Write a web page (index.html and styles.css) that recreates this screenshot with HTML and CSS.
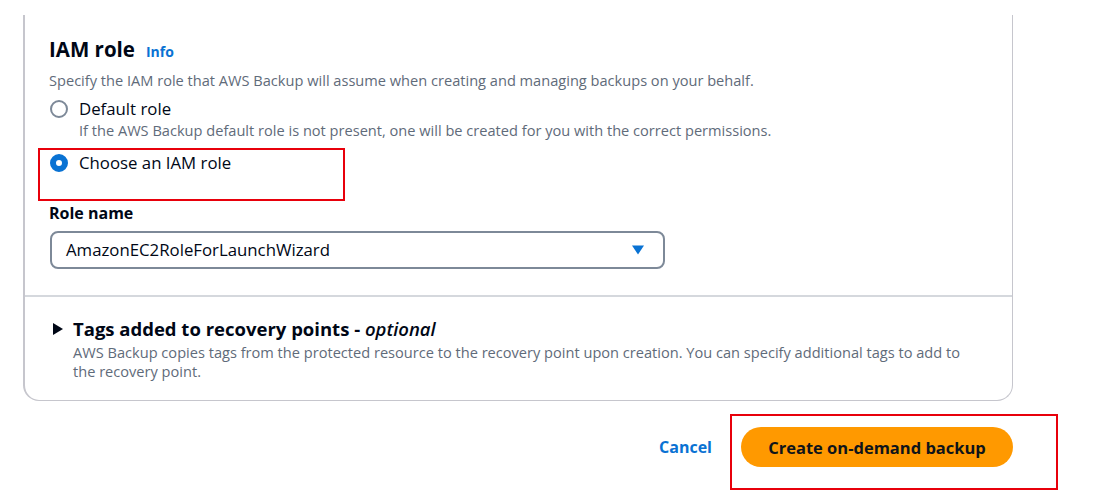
FILE: index.html
```html
<!DOCTYPE html>
<html>
<head>
<meta charset="utf-8">
<link rel="stylesheet" href="styles.css">
</head>
<body>
<div class="page">
  <div class="card">
    <div class="section">
      <div class="heading">
        <h2 class="title">IAM role</h2>
        <a class="info">Info</a>
      </div>
      <p class="desc">Specify the IAM role that AWS Backup will assume when creating and managing backups on your behalf.</p>
      <div class="radio-group">
        <div class="radio-row">
          <span class="radio"></span>
          <div class="radio-text">
            <div class="radio-label">Default role</div>
            <div class="radio-desc">If the AWS Backup default role is not present, one will be created for you with the correct permissions.</div>
          </div>
        </div>
        <div class="radio-row highlight">
          <span class="radio checked"></span>
          <div class="radio-text">
            <div class="radio-label">Choose an IAM role</div>
          </div>
        </div>
      </div>
      <div class="field">
        <div class="field-label">Role name</div>
        <div class="select">
          <span class="select-value">AmazonEC2RoleForLaunchWizard</span>
          <svg class="caret" width="14" height="12" viewBox="0 0 14 12"><path d="M1 1.5h12L7 10.5z" fill="#0972d3"/></svg>
        </div>
      </div>
    </div>
    <div class="tags">
      <div class="tags-head">
        <svg class="tri" width="10" height="12" viewBox="0 0 10 12"><path d="M0 0L10 6L0 12z" fill="#000716"/></svg>
        <span class="tags-title">Tags added to recovery points - <i>optional</i></span>
      </div>
      <p class="tags-desc">AWS Backup copies tags from the protected resource to the recovery point upon creation. You can specify additional tags to add to the recovery point.</p>
    </div>
  </div>
  <div class="actions">
    <a class="cancel">Cancel</a>
    <div class="primary-wrap">
      <button class="primary">Create on-demand backup</button>
    </div>
  </div>
</div>
</body>
</html>
```

FILE: styles.css
```css
* { box-sizing: border-box; }
html, body { margin: 0; padding: 0; background: #fff; }
body {
  font-family: "Open Sans", "Noto Sans", Arial, sans-serif;
  color: #000716;
  width: 1107px;
  height: 502px;
  overflow: hidden;
}
.page {
  padding: 15px 0 0 23px;
  width: 1107px;
}
.card {
  width: 990px;
  border: 1px solid #c6c6cd;
  border-left-width: 2px;
  border-top: none;
  border-radius: 0 0 16px 16px;
}
.section {
  padding: 22px 24px 26px 24px;
}
.heading {
  display: flex;
  align-items: baseline;
  gap: 11px;
  height: 24px;
}
.title {
  margin: 0;
  font-size: 20.5px;
  line-height: 24px;
  font-weight: 700;
}
.info {
  font-size: 14px;
  font-weight: 700;
  color: #0972d3;
}
.desc {
  margin: 9px 0 0 0;
  font-size: 14.6px;
  line-height: 20px;
  color: #5f6b7a;
}
.radio-group {
  margin-top: 8px;
  display: flex;
  flex-direction: column;
}
.radio-row {
  display: flex;
  align-items: flex-start;
  gap: 11px;
  padding-left: 1px;
}
.radio-row.highlight {
  position: relative;
  margin-top: 12px;
  height: 22px;
}
.radio-row.highlight::before {
  content: "";
  position: absolute;
  left: -11px;
  top: -4px;
  width: 303px;
  height: 49px;
  border: 2px solid #e8000b;
  pointer-events: none;
}
.radio {
  flex: none;
  width: 18px;
  height: 18px;
  margin-top: 2px;
  border-radius: 50%;
  border: 2px solid #7d8998;
  background: #fff;
}
.radio.checked {
  border: 6px solid #0972d3;
}
.radio-label {
  font-size: 16.8px;
  line-height: 22px;
}
.radio-desc {
  font-size: 14.6px;
  line-height: 20px;
  color: #5f6b7a;
}
.field {
  margin-top: 28px;
}
.field-label {
  font-size: 16px;
  font-weight: 700;
  line-height: 22px;
}
.select {
  margin-top: 7px;
  margin-left: 1px;
  width: 615px;
  height: 38px;
  border: 2px solid #7d8998;
  border-radius: 8px;
  display: flex;
  align-items: center;
  justify-content: space-between;
  padding: 0 18px 0 14px;
}
.select-value {
  font-size: 16.8px;
  line-height: 22px;
}
.caret { display: block; }
.tags {
  border-top: 2px solid #d5d8dd;
  padding: 20px 24px 19px 28px;
}
.tags-head {
  display: flex;
  align-items: center;
  gap: 10px;
  height: 24px;
}
.tri { flex: none; }
.tags-title {
  font-size: 18.5px;
  font-weight: 700;
  line-height: 24px;
}
.tags-title i { font-weight: 600; }
.tags-desc {
  margin: 2px 0 0 20px;
  font-size: 14.6px;
  line-height: 19px;
  color: #5f6b7a;
  width: 905px;
}
.actions {
  display: flex;
  align-items: flex-start;
  justify-content: flex-end;
  width: 1035px;
  margin-top: 13px;
}
.cancel {
  margin-top: 22px;
  font-size: 16px;
  line-height: 22px;
  font-weight: 700;
  color: #0972d3;
  margin-right: 18px;
}
.primary-wrap {
  border: 2px solid #e8000b;
  width: 328px;
  height: 76px;
  padding: 11px 0 0 9px;
}
.primary {
  font-family: inherit;
  width: 272px;
  height: 40px;
  border: none;
  border-radius: 20px;
  background: #ff9900;
  color: #0f141a;
  font-size: 16.5px;
  font-weight: 700;
  padding: 0;
}
```
